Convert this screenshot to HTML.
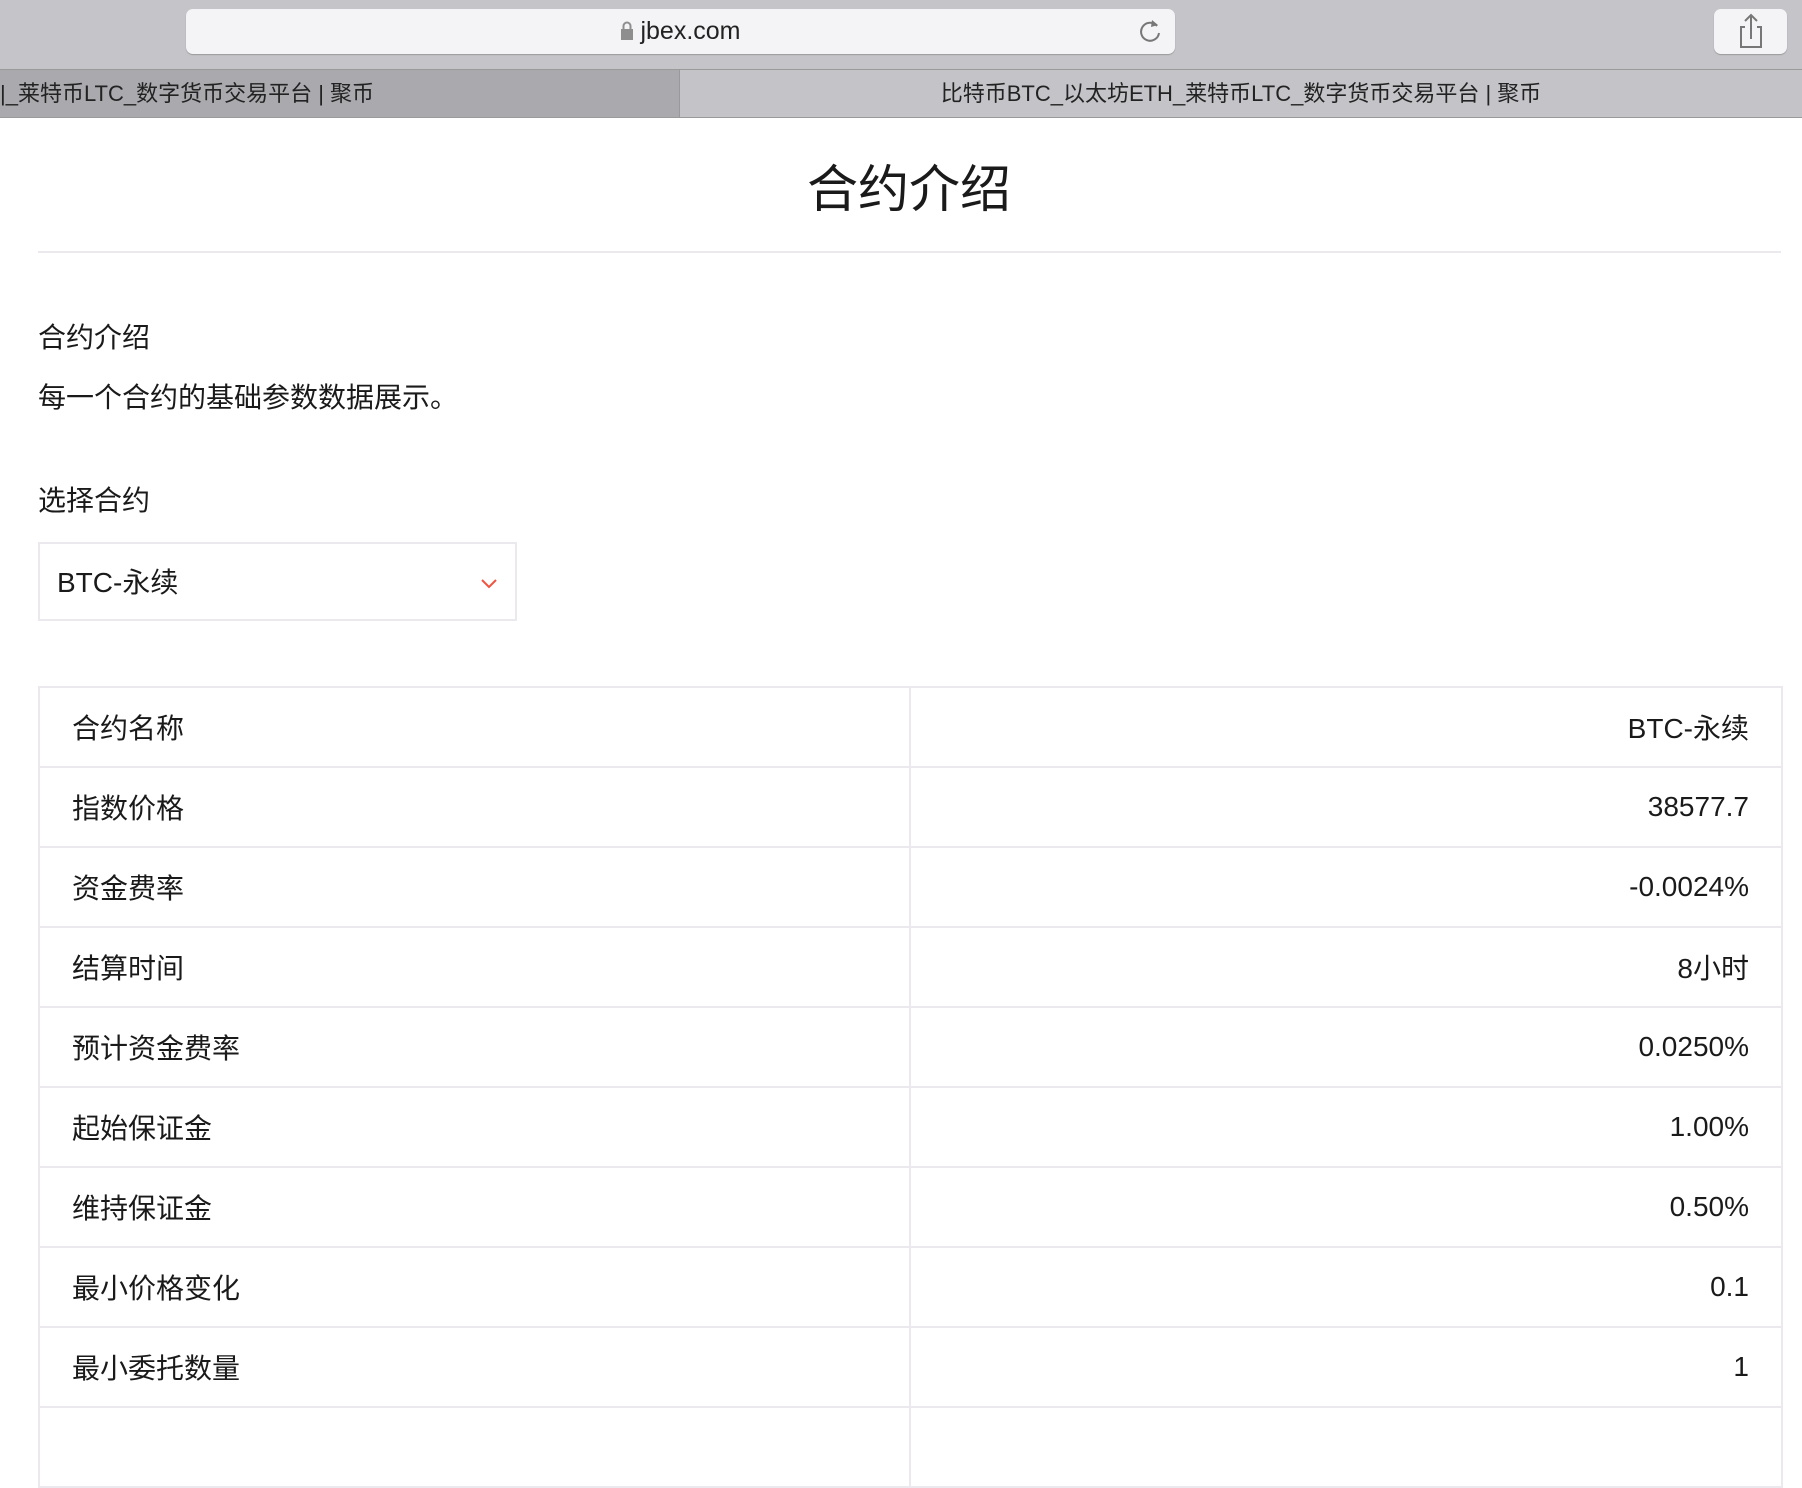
<!DOCTYPE html>
<html><head><meta charset="utf-8"><style>
body{margin:0;width:1802px;height:1412px;overflow:hidden;background:#fff;font-family:"Liberation Sans","Noto Sans CJK SC",sans-serif;color:#1a1a1a;position:relative}
.tb{position:absolute;left:0;top:0;width:1802px;height:69px;background:#c5c4c9}
.url{position:absolute;left:186px;top:9px;width:989px;height:45px;background:#f4f4f6;border-radius:7px;box-shadow:0 1px 1px #999;text-align:center;font-size:25px;line-height:45px;color:#222}
.share{position:absolute;left:1714px;top:9px;width:73px;height:45px;background:#f4f4f6;border-radius:7px;box-shadow:0 1px 1px #999}
.tabs{position:absolute;left:0;top:69px;width:1802px;height:49px;background:#c4c3c8;border-top:1px solid #999;border-bottom:1px solid #999;box-sizing:border-box;font-size:22px;line-height:47px;color:#222}
.lt{position:absolute;left:0;top:0;width:679px;height:47px;background:#aaa9ae;border-right:1px solid #999}
.h1{position:absolute;left:0;width:1818px;top:158px;text-align:center;font-size:51px;line-height:64px}
.hr{position:absolute;left:38px;top:251px;width:1743px;height:2px;background:#ebe8ee}
.t{position:absolute;left:38px;font-size:28px;line-height:36px}
.sel{position:absolute;left:38px;top:542px;width:479px;height:79px;border:2px solid #ebe8ee;box-sizing:border-box;font-size:28px;line-height:77px;padding-left:17px}
table{position:absolute;left:38px;top:686px;width:1745px;border-collapse:collapse}
td{border:2px solid #ebe8ee;height:78px;font-size:28px;padding:0 32px}
td+td{text-align:right;width:806px}
</style></head><body>
<div class="tb"><div class="url"><svg width="14" height="20" viewBox="0 0 14 20" style="vertical-align:-2px;margin-right:6px"><rect x="1" y="8" width="12" height="11" fill="#8e8e8e"/><path d="M3.5 8V5a3.5 3.5 0 0 1 7 0v3" fill="none" stroke="#8e8e8e" stroke-width="2"/></svg>jbex.com
<svg width="26" height="28" viewBox="0 0 26 28" style="position:absolute;right:12px;top:8px"><path d="M20 9a9 9 0 1 0 2 7" fill="none" stroke="#777" stroke-width="2"/><path d="M15 3l6 5-7 2z" fill="#777"/></svg></div>
<div class="share"><svg width="73" height="45" viewBox="0 0 73 45"><path d="M31 18h-4v20h20V18h-4M37 30V7M31 12l6-6 6 6" fill="none" stroke="#777" stroke-width="2"/></svg></div></div>
<div class="tabs"><div class="lt">|_莱特币LTC_数字货币交易平台 | 聚币</div><div style="position:absolute;left:680px;right:0;text-align:center">比特币BTC_以太坊ETH_莱特币LTC_数字货币交易平台 | 聚币</div></div>
<div class="h1">合约介绍</div>
<div class="hr"></div>
<div class="t" style="top:320px">合约介绍</div>
<div class="t" style="top:380px">每一个合约的基础参数数据展示。</div>
<div class="t" style="top:483px">选择合约</div>
<div class="sel">BTC-永续<svg width="16" height="10" viewBox="0 0 16 10" style="position:absolute;left:441px;top:35px"><path d="M1 1l7 7 7-7" fill="none" stroke="#f0533f" stroke-width="2"/></svg></div>
<table>
<tr><td>合约名称</td><td>BTC-永续</td></tr>
<tr><td>指数价格</td><td>38577.7</td></tr>
<tr><td>资金费率</td><td>-0.0024%</td></tr>
<tr><td>结算时间</td><td>8小时</td></tr>
<tr><td>预计资金费率</td><td>0.0250%</td></tr>
<tr><td>起始保证金</td><td>1.00%</td></tr>
<tr><td>维持保证金</td><td>0.50%</td></tr>
<tr><td>最小价格变化</td><td>0.1</td></tr>
<tr><td>最小委托数量</td><td>1</td></tr>
<tr><td>&nbsp;</td><td>&nbsp;</td></tr>
</table>
</body></html>
